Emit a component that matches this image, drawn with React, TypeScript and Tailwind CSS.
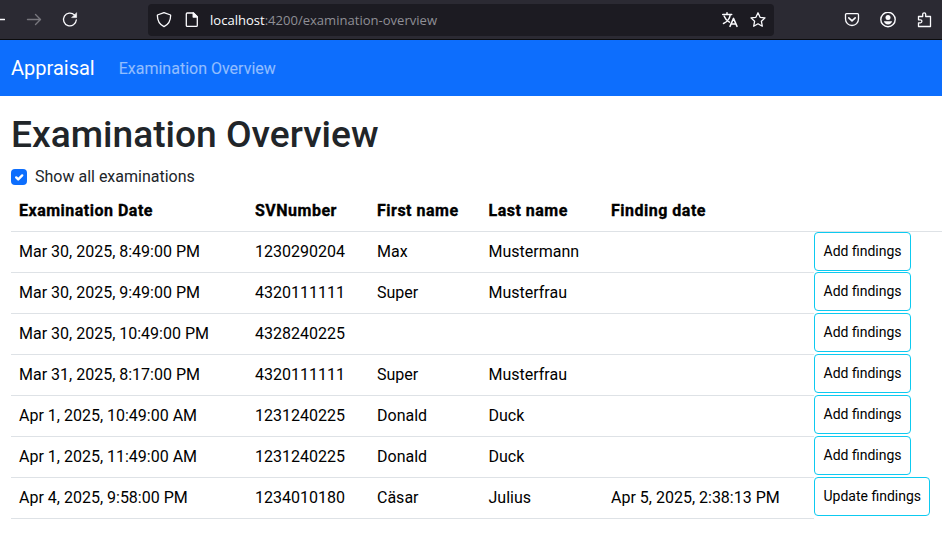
import type { ReactNode } from "react";

type Exam = { date: string; sv: string; first?: string; last?: string; finding?: string };

const exams: Exam[] = [
  { date: "Mar 30, 2025, 8:49:00 PM", sv: "1230290204", first: "Max", last: "Mustermann" },
  { date: "Mar 30, 2025, 9:49:00 PM", sv: "4320111111", first: "Super", last: "Musterfrau" },
  { date: "Mar 30, 2025, 10:49:00 PM", sv: "4328240225" },
  { date: "Mar 31, 2025, 8:17:00 PM", sv: "4320111111", first: "Super", last: "Musterfrau" },
  { date: "Apr 1, 2025, 10:49:00 AM", sv: "1231240225", first: "Donald", last: "Duck" },
  { date: "Apr 1, 2025, 11:49:00 AM", sv: "1231240225", first: "Donald", last: "Duck" },
  { date: "Apr 4, 2025, 9:58:00 PM", sv: "1234010180", first: "Cäsar", last: "Julius", finding: "Apr 5, 2025, 2:38:13 PM" },
];

const headings = ["Examination Date", "SVNumber", "First name", "Last name", "Finding date", ""];

function Icon({ children, className = "" }: { children: ReactNode; className?: string }) {
  return (
    <svg viewBox="0 0 16 16" className={`size-4 shrink-0 ${className}`} fill="none" stroke="currentColor" strokeWidth="1.3" strokeLinecap="round" strokeLinejoin="round">
      {children}
    </svg>
  );
}

function BrowserBar() {
  return (
    <div className="flex h-10 items-center overflow-hidden border-b border-[#0c0c0d] bg-[#2b2a33] text-[#fbfbfe]">
      <Icon className="-ml-[11px]"><path d="M2 7.5h13.5M7 2.5l-5 5 5 5" /></Icon>
      <Icon className="ml-[21px] text-[#78777e]"><path d="M1.5 7.5h12.7M9.5 2.5l5 5-5 5" strokeWidth="1.4" /></Icon>
      <Icon className="ml-5">
        <path d="M14.3 8A6.4 6.4 0 1 1 12.4 2.9" strokeWidth="1.3" />
        <path d="M14.6 1v4.6H10z" fill="currentColor" strokeWidth=".6" />
      </Icon>
      <div className="ml-[70px] flex h-8 w-[626px] items-center rounded bg-[#1c1b22] pr-2 pl-2">
        <Icon><path d="M8 .6 14.6 3c.2 5.2-1.7 9.2-6.6 11.6C3.1 12.2 1.2 8.2 1.4 3Z" /></Icon>
        <Icon className="ml-3">
          <path d="M3.3 1h6.2l3.8 3.8v8.6a1 1 0 0 1-1 1h-9a1 1 0 0 1-1-1V2a1 1 0 0 1 1-1Z" />
          <path d="M9.2 1v4.1h4.1z" fill="currentColor" />
        </Icon>
        <div className="ml-2.5 grow font-['Open_Sans',sans-serif] text-[13.05px] leading-5 whitespace-nowrap text-[#8f8f96]">
          <span className="text-[#fbfbfe]">localhost</span>:4200/examination-overview
        </div>
        <Icon className="mr-3">
          <path d="M.7 2.5h9M5 .8v1.7M1.5 11.5C5 10 7.7 7 8.3 2.5M2.2 4.2c1 2.6 3 4.8 5.2 6M8 14.4l3.5-8 3.5 8M9.2 12h4.6" strokeWidth="1.5" />
        </Icon>
        <Icon><path d="m8 .8 2.1 4.5 4.9.6-3.6 3.4.9 4.9L8 11.8l-4.3 2.4.9-4.9L1 5.9l4.9-.6z" /></Icon>
      </div>
      <Icon className="ml-[70px]">
        <path d="M2.5 1.7h11a1 1 0 0 1 1 1V7a6.5 6.5 0 0 1-13 0V2.7a1 1 0 0 1 1-1Z" />
        <path d="M4.8 5.8 8 8.8l3.2-3" strokeWidth="1.6" />
      </Icon>
      <Icon className="ml-5">
        <circle cx="8" cy="7.5" r="7.2" strokeWidth="1.4" />
        <circle cx="8" cy="5.6" r="2.5" fill="currentColor" stroke="none" />
        <path d="M3.9 9.3h8.2c-.4 1.9-2 3.2-4.1 3.2s-3.7-1.3-4.1-3.2Z" fill="currentColor" stroke="none" />
      </Icon>
      <Icon className="ml-5">
        <path d="M2.5 4.5h4.2V2.3a1.5 1.5 0 0 1 3 0v2.2h4.8v10h-12v-3.7h1.9a1.5 1.5 0 0 0 0-3H2.5z" />
      </Icon>
    </div>
  );
}

function Cell({ children }: { children?: ReactNode }) {
  return <div className="border-b border-[#dee2e6] p-2">{children}</div>;
}

const columns = "grid grid-cols-[236px_122px_111.5px_122.5px_211px_1fr]";

export default function App() {
  return (
    <div className="h-[541px] overflow-hidden bg-white font-[Roboto,sans-serif] text-base leading-6 text-black">
      <BrowserBar />
      <nav className="flex h-14 items-center bg-[#0d6efd] pl-[11px]">
        <span className="text-xl text-white">Appraisal</span>
        <span className="ml-6 pt-0.5 text-white/55">Examination Overview</span>
      </nav>
      <main className="pl-[11px]">
        <h1 className="pt-[17px] text-[37.15px] leading-[44px] font-medium text-[#212529]">Examination Overview</h1>
        <label className="mt-2 flex h-6 items-center gap-2 text-[#212529]">
          <span className="mb-px flex size-4 items-center justify-center rounded bg-[#0d6efd]">
            <svg viewBox="0 0 20 20" className="size-4" fill="none" stroke="white" strokeWidth="3" strokeLinecap="round" strokeLinejoin="round"><path d="m6.5 10.5 2.5 2.5 5-5" /></svg>
          </span>
          Show all examinations
        </label>
        <div className={`${columns} mt-0.5 font-bold tracking-[0.5px] [-webkit-text-stroke:0.35px_black]`}>
          {headings.map((h, i) => <div key={i} className="h-[41px] border-b border-[#dee2e6] px-2 pt-2">{h}</div>)}
        </div>
        {exams.map((e, i) => (
          <div key={i} className={`${columns} h-[41px]`}>
            <Cell>{e.date}</Cell>
            <Cell>{e.sv}</Cell>
            <Cell>{e.first}</Cell>
            <Cell>{e.last}</Cell>
            <Cell>{e.finding}</Cell>
            <div>
              <button className={`${i === 0 ? "" : "-mt-px"} ${e.finding ? "w-[116px]" : "w-[97px]"} block h-[39px] rounded border border-[#0dcaf0] pb-px pl-[8.5px] text-left text-sm whitespace-nowrap`}>
                {e.finding ? "Update findings" : "Add findings"}
              </button>
            </div>
          </div>
        ))}
      </main>
    </div>
  );
}
